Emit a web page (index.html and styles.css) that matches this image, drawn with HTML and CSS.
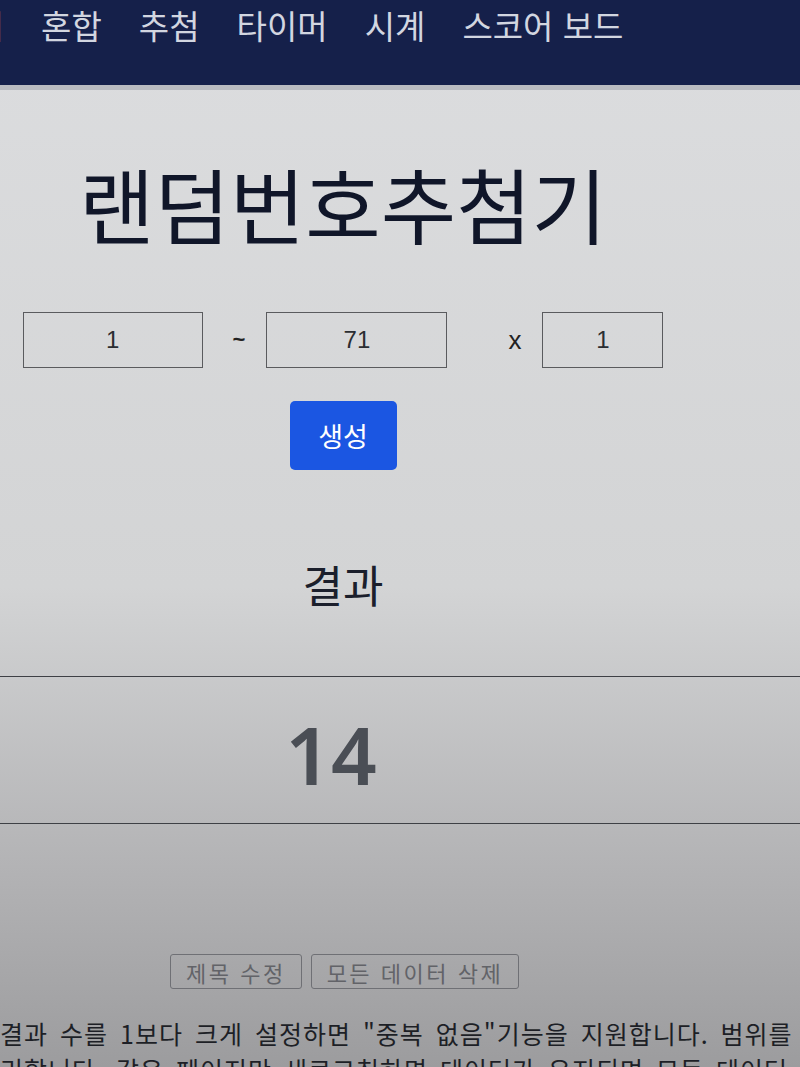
FILE: index.html
```html
<!DOCTYPE html>
<html lang="ko">
<head>
    <meta charset="UTF-8">
    <meta name="viewport" content="width=device-width, initial-scale=1.0">
    <title>랜덤번호추첨기</title>
    <link rel="stylesheet" href="styles.css">
</head>
<body>
    <header class="topnav">
        <ul class="menu">
            <li>사다리</li>
            <li>혼합</li>
            <li>추첨</li>
            <li>타이머</li>
            <li>시계</li>
            <li>스코어 보드</li>
        </ul>
    </header>

    <main class="generator">
        <h1 class="title">랜덤번호추첨기</h1>

        <div class="range-row">
            <input class="num-input num-min" type="text" value="1">
            <span class="sep">~</span>
            <input class="num-input num-max" type="text" value="71">
            <span class="sep sep-x">x</span>
            <input class="num-input num-count" type="text" value="1">
        </div>

        <button class="make-btn" type="button">생성</button>

        <h2 class="result-title">결과</h2>
    </main>

    <section class="result-box">
        <div class="result-num">14</div>
    </section>

    <div class="tool-row">
        <button class="line-btn" type="button">제목 수정</button>
        <button class="line-btn" type="button">모든 데이터 삭제</button>
    </div>

    <p class="notice">결과 수를 1보다 크게 설정하면 "중복 없음"기능을 지원합니다. 범위를 설정하세요.<br>리합니다. 같은 페이지만 새로고침하면 데이터가 유지되며 모든 데이터 삭제로 초기화합니다.</p>
</body>
</html>
```

FILE: styles.css
```css
* {
    margin: 0;
    padding: 0;
    box-sizing: border-box;
}

body {
    font-family: "Noto Sans CJK KR", "Noto Sans", sans-serif;
    background: linear-gradient(#dcdddf 0%, #d3d4d5 55%, #b2b2b4 82%, #9c9c9e 100%);
    color: #141a2e;
    height: 1067px;
    overflow: hidden;
}

/* 상단 메뉴 */
.topnav {
    height: 90px;
    background: #15204a;
    border-bottom: 5px solid #b9bbc0;
    overflow: hidden;
}

.menu {
    list-style: none;
    display: flex;
    gap: 37px;
    margin-left: -87px;
    padding-top: 3px;
    font-size: 33px;
    line-height: 44px;
    color: #d2d6e0;
    white-space: nowrap;
}

/* 메인 */
.generator {
    width: 686px;
    text-align: center;
}

.title {
    margin-top: 58px;
    font-size: 82px;
    font-weight: 400;
    line-height: 110px;
    color: #101629;
}

.range-row {
    display: flex;
    align-items: center;
    justify-content: center;
    margin-top: 54px;
}

.num-input {
    height: 56px;
    border: 1px solid #5a5b5e;
    background: transparent;
    font-family: "Liberation Sans", Arial, sans-serif;
    font-size: 24px;
    color: #2b2d31;
    text-align: center;
    outline: none;
}

.num-min { width: 180px; }
.num-max { width: 181px; }
.num-count { width: 121px; }

.sep {
    font-family: "Liberation Sans", Arial, sans-serif;
    font-size: 22px;
    font-weight: 700;
    color: #222;
    margin: 0 21px 0 30px;
}

.sep-x {
    font-weight: 400;
    font-size: 26px;
    margin: 0 21px 0 61px;
}

.make-btn {
    margin-top: 33px;
    width: 107px;
    height: 69px;
    background: #1b56e2;
    border: none;
    border-radius: 5px;
    color: #fff;
    font-family: inherit;
    font-size: 27px;
}

.result-title {
    margin-top: 82px;
    font-size: 44px;
    font-weight: 400;
    line-height: 64px;
    color: #1b1f2c;
}

/* 결과 */
.result-box {
    margin-top: 60px;
    height: 148px;
    border-top: 1.5px solid #3e4045;
    border-bottom: 1.5px solid #3e4045;
    display: flex;
    align-items: center;
    padding-top: 8px;
}

.result-num {
    width: 662px;
    text-align: center;
    font-family: "Noto Sans", sans-serif;
    font-size: 80px;
    font-weight: 600;
    color: #4a4e55;
    line-height: 1;
}

.tool-row {
    display: flex;
    gap: 9px;
    margin: 130px 0 0 170px;
}

.line-btn {
    height: 35px;
    padding: 0 15px;
    border: 1px solid #6f7075;
    border-radius: 3px;
    background: transparent;
    font-family: inherit;
    font-size: 22px;
    letter-spacing: 2.5px;
    color: #626368;
}

.notice {
    margin-top: 26px;
    font-size: 25px;
    line-height: 36px;
    color: #1d1f26;
    white-space: nowrap;
    letter-spacing: 1px;
    word-spacing: 4px;
}
```
